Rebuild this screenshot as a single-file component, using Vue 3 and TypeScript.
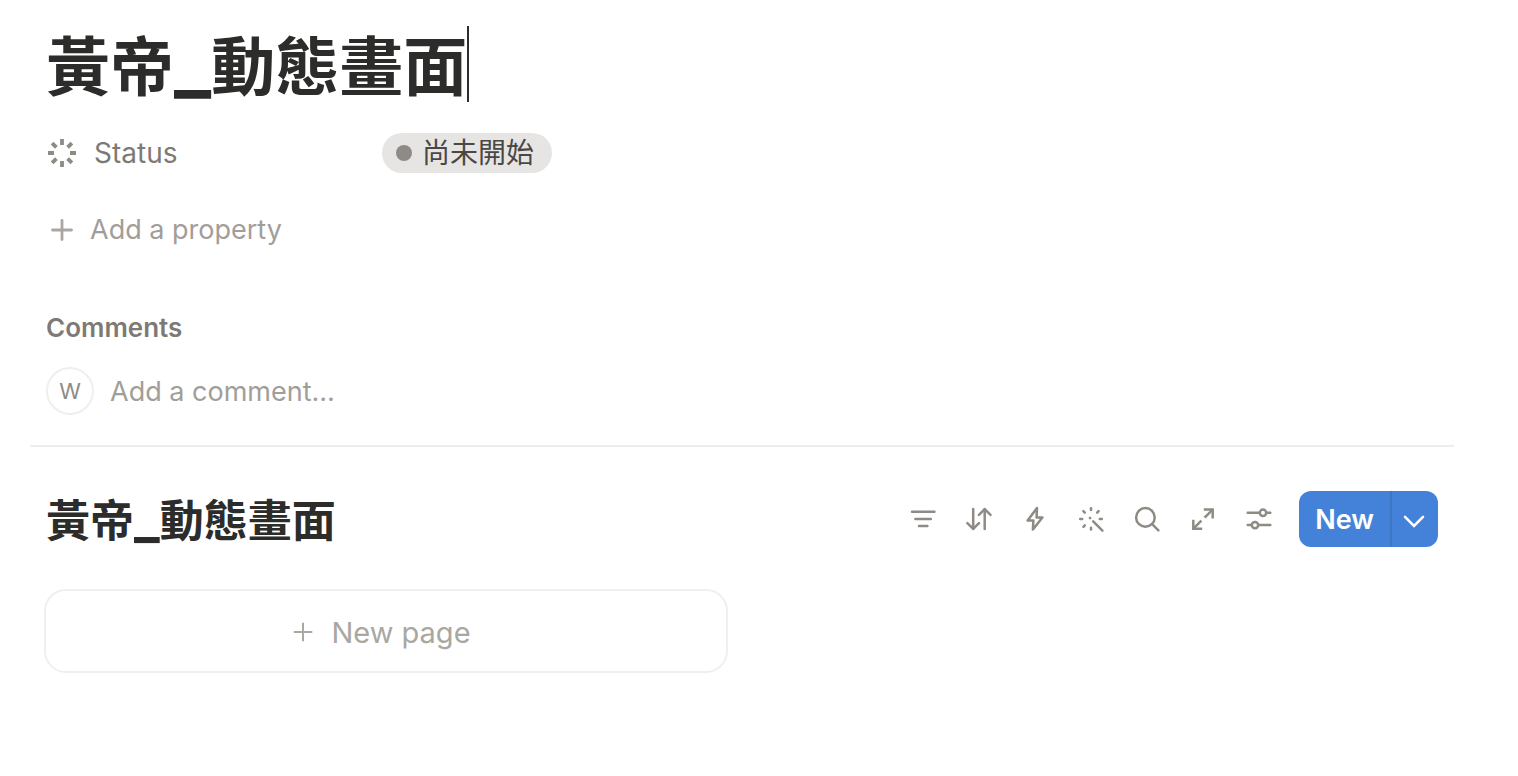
<script setup lang="ts">
import { ref } from 'vue'

interface Tool {
  name: string
  paths: string[]
  circles?: { x: number; y: number; r: number }[]
  sharp?: boolean
}

const titleParts = ['黃帝', '動態畫面']
const comment = ref('')

const tools: Tool[] = [
  { name: 'Filter', paths: ['M5 8.7H27.4', 'M8.4 15.9H23.8', 'M12 23H20.4'] },
  {
    name: 'Sort',
    paths: ['M10.2 6V26', 'M4.4 20.2L10.2 25.8L16 20.2', 'M21.7 26V6', 'M15.9 11.8L21.7 6.2L27.5 11.8'],
  },
  { name: 'Automations', paths: ['M18 5L8.6 17.4H14.4L13.9 26.6L23.4 14.4H17.6Z'] },
  {
    name: 'Autofill',
    paths: [
      'M18.2 18.4L27.4 27.6', 'M14.9 14.9L15.2 15.2', 'M16 5.2V7', 'M16 24.8V26.6', 'M5.2 15.9H7.2',
      'M24.8 15.9H26.8', 'M8.4 8.2L9.8 9.6', 'M23.6 8.2L22.2 9.6', 'M8.4 23.8L9.8 22.4',
    ],
  },
  { name: 'Search', paths: ['M21.4 21.4L27.4 27.4'], circles: [{ x: 14.4, y: 14.4, r: 9.3 }] },
  {
    name: 'Expand',
    paths: ['M16.8 6.5H25.7V15.4', 'M25.4 6.8L17.6 14.6', 'M6.3 16.8V25.7H15.2', 'M6.6 25.4L14.4 17.6'],
    sharp: true,
  },
  {
    name: 'View settings',
    paths: ['M4.7 9.8H16.6', 'M23.4 9.8H27.3', 'M4.7 22.1H8.6', 'M15.4 22.1H27.3'],
    circles: [{ x: 20, y: 9.8, r: 3.2 }, { x: 12, y: 22.1, r: 3.2 }],
  },
]
</script>

<template>
  <main class="page">
    <section class="header">
      <h1 class="title">
        <span>{{ titleParts[0] }}<span class="joint">_</span>{{ titleParts[1] }}</span><span class="caret"></span>
      </h1>

      <div class="property">
        <button type="button" class="property-name">
          <svg class="icon burst" viewBox="0 0 32 32" aria-hidden="true">
            <path
              d="M16 2V8M16 24V30M2 16H8M24 16H30M6.1 6.1L10.4 10.4M21.6 21.6L25.9 25.9M25.9 6.1L21.6 10.4M10.4 21.6L6.1 25.9"
            />
          </svg>
          <span>Status</span>
        </button>
        <button type="button" class="pill"><span class="dot"></span>尚未開始</button>
      </div>

      <button type="button" class="add-property">
        <svg class="icon plus" viewBox="0 0 32 32" aria-hidden="true">
          <path d="M6.5 16H25.5M16 6.5V25.5" />
        </svg>
        <span>Add a property</span>
      </button>

      <h2 class="comments-title">Comments</h2>
      <div class="comment-row">
        <span class="avatar">W</span>
        <input
          v-model="comment"
          class="comment-input"
          type="text"
          aria-label="Add a comment"
          placeholder="Add a comment…"
        />
      </div>
    </section>

    <hr class="rule" />

    <section class="database">
      <div class="bar">
        <h2 class="db-title">{{ titleParts[0] }}<span class="joint">_</span>{{ titleParts[1] }}</h2>
        <div class="tools">
          <button v-for="tool in tools" :key="tool.name" type="button" class="tool" :aria-label="tool.name">
            <svg class="icon" :class="{ sharp: tool.sharp }" viewBox="0 0 32 32" aria-hidden="true">
              <path v-for="d in tool.paths" :key="d" :d="d" />
              <circle v-for="c in tool.circles" :key="c.x" :cx="c.x" :cy="c.y" :r="c.r" />
            </svg>
          </button>
        </div>
        <div class="split">
          <button type="button" class="new">New</button>
          <button type="button" class="more" aria-label="More ways to create">
            <svg class="chevron" viewBox="0 0 24 24" aria-hidden="true">
              <path d="M3 9.8L12 18.8L21 9.8" />
            </svg>
          </button>
        </div>
      </div>

      <div class="gallery">
        <button type="button" class="card">
          <svg class="icon thin" viewBox="0 0 32 32" aria-hidden="true">
            <path d="M7.5 16H24.5M16 7.5V24.5" />
          </svg>
          <span>New page</span>
        </button>
      </div>
    </section>
  </main>
</template>

<style>
body {
  margin: 0;
  background: #fff;
}
</style>

<style scoped>
.page {
  font-family: Inter, 'Noto Sans CJK TC', sans-serif;
  padding: 26px 64px 40px 30px;
  color: #2c2c2b;
}

button,
input {
  font: inherit;
  color: inherit;
  background: none;
  border: 0;
  padding: 0;
  margin: 0;
}

button {
  cursor: pointer;
}

h1,
h2 {
  margin: 0;
}

.header {
  display: flex;
  flex-direction: column;
  align-items: flex-start;
  padding: 0 16px;
}

.title {
  display: flex;
  align-items: flex-end;
  font-size: 64px;
  line-height: 70px;
  font-weight: 700;
}

.title .joint {
  font-size: 78px;
  line-height: 0;
}

.caret {
  width: 2px;
  height: 76px;
  background: #2c2c2b;
}

.icon {
  width: 32px;
  height: 32px;
  flex: none;
  fill: none;
  stroke: #8e8b84;
  stroke-width: 2.5;
  stroke-linecap: round;
  stroke-linejoin: round;
}

.icon.sharp {
  stroke-linecap: butt;
  stroke-linejoin: miter;
}

.icon.burst {
  stroke-width: 3.8;
  stroke-linecap: butt;
}

.icon.plus {
  stroke: #aaa7a1;
  stroke-width: 2.8;
}

.icon.thin {
  stroke: #aaa7a1;
  stroke-width: 2;
}

.property {
  display: flex;
  align-items: center;
  margin-top: 31px;
  font-size: 28px;
  line-height: 40px;
}

.property-name {
  display: flex;
  align-items: center;
  gap: 16px;
  width: 336px;
  color: #7d7a75;
}

.pill {
  display: flex;
  align-items: center;
  gap: 10px;
  height: 40px;
  padding: 0 18px 0 14px;
  border-radius: 20px;
  background: #e6e5e3;
  color: #494846;
}

.dot {
  width: 16px;
  height: 16px;
  border-radius: 50%;
  background: #8e8b86;
}

.add-property {
  display: flex;
  align-items: center;
  gap: 12px;
  margin-top: 37px;
  font-size: 27px;
  line-height: 40px;
  color: #a19e99;
}

.comments-title {
  margin-top: 58px;
  font-size: 26px;
  line-height: 40px;
  font-weight: 600;
  color: #7d7a75;
}

.comment-row {
  display: flex;
  align-items: center;
  align-self: stretch;
  gap: 16px;
  margin-top: 19px;
}

.avatar {
  box-sizing: border-box;
  width: 48px;
  height: 48px;
  flex: none;
  border: 2px solid #efefee;
  border-radius: 50%;
  font-size: 22px;
  line-height: 44px;
  text-align: center;
  color: #8e8b86;
}

.comment-input {
  flex: 1;
  min-width: 0;
  height: 48px;
  font-size: 27px;
  outline: none;
}

.comment-input::placeholder {
  color: #a19e99;
  opacity: 1;
}

.rule {
  height: 2px;
  margin: 30px 0 0;
  border: 0;
  background: #ededec;
}

.database {
  padding: 44px 16px 0 14px;
}

.bar {
  display: flex;
  align-items: center;
}

.db-title {
  flex: 1;
  padding: 4px 0 0 2px;
  font-size: 44px;
  line-height: 52px;
  font-weight: 700;
}

.db-title .joint {
  font-size: 54px;
  line-height: 0;
}

.tools {
  display: flex;
  margin-right: 12px;
}

.tool {
  display: flex;
  align-items: center;
  justify-content: center;
  width: 56px;
  height: 56px;
}

.split {
  display: flex;
  height: 56px;
  border-radius: 12px;
  overflow: hidden;
  background: #4482da;
  color: #fff;
}

.new {
  padding: 0 16px;
  font-size: 27px;
  font-weight: 600;
}

.more {
  display: flex;
  align-items: center;
  justify-content: center;
  width: 48px;
  padding-right: 2px;
  border-left: 2px solid #3e75c4;
}

.chevron {
  width: 24px;
  height: 24px;
  fill: none;
  stroke: #fff;
  stroke-width: 2.6;
  stroke-linecap: round;
}

.gallery {
  display: grid;
  grid-template-columns: 1fr 1fr;
  gap: 26px;
  margin-top: 42px;
}

.card {
  display: flex;
  align-items: center;
  justify-content: center;
  gap: 12px;
  box-sizing: border-box;
  height: 84px;
  padding: 2px 14px 0 0;
  border: 2px solid #efefee;
  border-radius: 22px;
  font-size: 29px;
  color: #aaa7a1;
}
</style>
